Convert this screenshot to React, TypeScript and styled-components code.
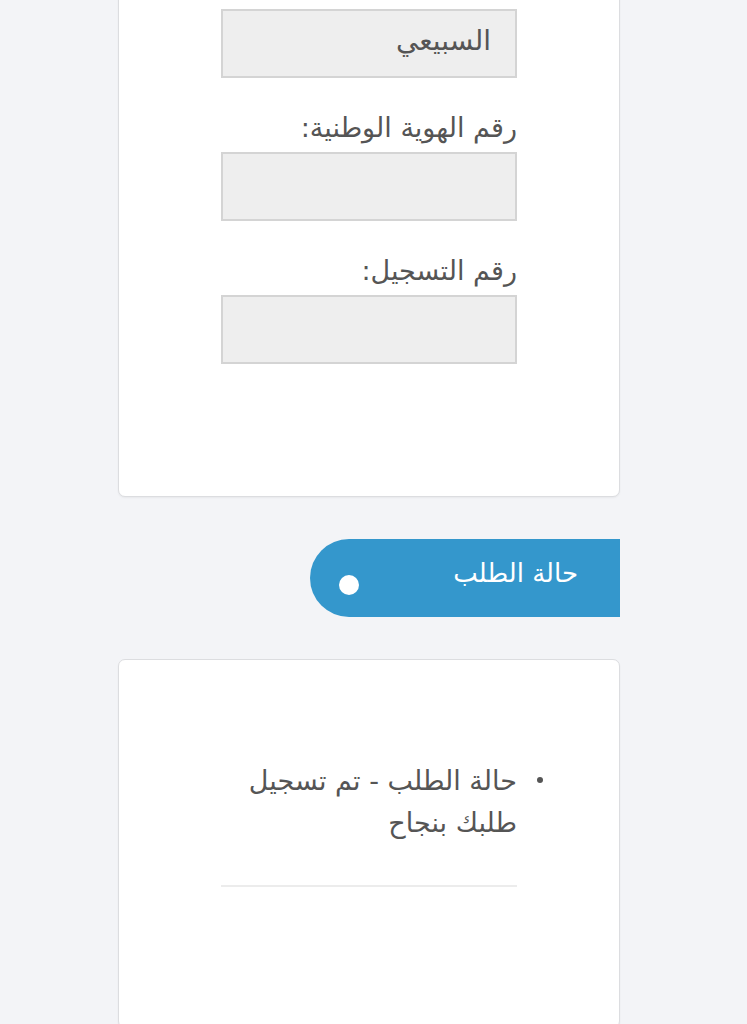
import React from "react";
import styled, { createGlobalStyle } from "styled-components";

const GlobalStyle = createGlobalStyle`
  html, body {
    margin: 0;
    padding: 0;
    background: #f3f4f7;
    font-family: "DejaVu Sans", "Noto Sans", sans-serif;
    overflow: hidden;
  }
`;

const Page = styled.div`
  width: 747px;
  height: 1024px;
  overflow: hidden;
  background: #f3f4f7;
`;

const Card = styled.div<{ $offTop?: boolean }>`
  box-sizing: border-box;
  width: 502px;
  margin-left: 118px;
  background: #ffffff;
  border: 1.5px solid #dcdde0;
  border-radius: 7px;
  box-shadow: 0 1px 2px rgba(0, 0, 0, 0.05);
  direction: rtl;
  margin-top: ${(p) => (p.$offTop ? "-30px" : "42px")};
`;

const FormBody = styled.div`
  padding: 38px 102px 132px 102px;
`;

const Field = styled.div<{ $first?: boolean }>`
  margin-top: ${(p) => (p.$first ? "0" : "32px")};
`;

const Label = styled.div`
  font-size: 27px;
  line-height: 36px;
  color: #555555;
  margin-bottom: 6px;
  text-align: right;
`;

const Input = styled.div`
  box-sizing: border-box;
  height: 69px;
  background: #eeeeee;
  border: 2px solid #d4d4d4;
  display: flex;
  align-items: center;
  padding: 0 24px 6px 24px;
  font-size: 28px;
  color: #555555;
`;

const Pill = styled.div`
  box-sizing: border-box;
  margin-top: 42px;
  margin-left: 310px;
  width: 310px;
  height: 78px;
  background: #3497cc;
  border-radius: 39px 0 0 39px;
  display: flex;
  direction: rtl;
  align-items: center;
  justify-content: space-between;
  padding: 0 42px 0 29px;
`;

const PillTitle = styled.span`
  color: #ffffff;
  font-size: 26px;
  line-height: 1;
  margin-top: -10px;
`;

const Dot = styled.span`
  width: 20px;
  height: 20px;
  border-radius: 50%;
  background: #ffffff;
  margin-top: 14px;
`;

const StatusBody = styled.div`
  padding: 100px 102px 140px 102px;
`;

const StatusList = styled.ul`
  margin: 0;
  padding: 0;
  list-style: none;
`;

const StatusItem = styled.li`
  position: relative;
  font-size: 27px;
  line-height: 42px;
  color: #555555;
  text-align: right;
  &::before {
    content: "";
    position: absolute;
    right: -26px;
    top: 17px;
    width: 6px;
    height: 6px;
    border-radius: 50%;
    background: #555555;
  }
`;

const Divider = styled.hr`
  border: none;
  border-top: 2px solid #ececec;
  margin: 41px 0 0 0;
`;

export default function App() {
  return (
    <Page>
      <GlobalStyle />
      <Card $offTop>
        <FormBody>
          <Field $first>
            <Input>السبيعي</Input>
          </Field>
          <Field>
            <Label>رقم الهوية الوطنية:</Label>
            <Input />
          </Field>
          <Field>
            <Label>رقم التسجيل:</Label>
            <Input />
          </Field>
        </FormBody>
      </Card>
      <Pill>
        <PillTitle>حالة الطلب</PillTitle>
        <Dot />
      </Pill>
      <Card>
        <StatusBody>
          <StatusList>
            <StatusItem>حالة الطلب - تم تسجيل طلبك بنجاح</StatusItem>
          </StatusList>
          <Divider />
        </StatusBody>
      </Card>
    </Page>
  );
}
